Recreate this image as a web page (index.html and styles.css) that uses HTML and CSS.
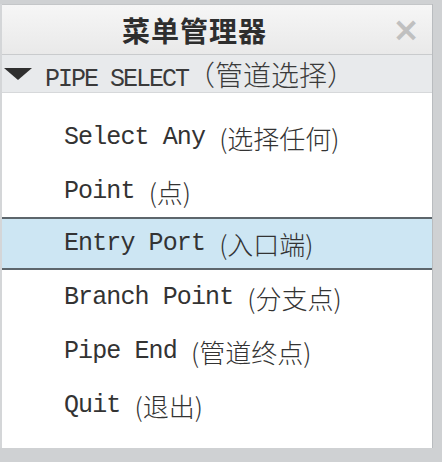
FILE: index.html
```html
<!DOCTYPE html>
<html lang="zh">
<head>
<meta charset="utf-8">
<title>菜单管理器</title>
<link rel="stylesheet" href="styles.css">
</head>
<body>
<div class="window">
  <div class="titlebar">
    <span class="title">菜单管理器</span>
    <span class="close">×</span>
  </div>
  <div class="section">
    <span class="arrow"></span>
    <span class="section-label">PIPE SELECT<span class="zh">（管道选择）</span></span>
  </div>
  <ul class="menu">
    <li class="item">Select Any <span class="zh">(选择任何)</span></li>
    <li class="item">Point <span class="zh">(点)</span></li>
    <li class="item active">Entry Port <span class="zh">(入口端)</span></li>
    <li class="item">Branch Point <span class="zh">(分支点)</span></li>
    <li class="item">Pipe End <span class="zh">(管道终点)</span></li>
    <li class="item">Quit <span class="zh">(退出)</span></li>
  </ul>
</div>
</body>
</html>
```
FILE: styles.css
```css
* { box-sizing: border-box; }
html, body {
  margin: 0;
  padding: 0;
}
body {
  width: 442px;
  height: 462px;
  background: #cfd1d3;
  overflow: hidden;
  font-family: "Liberation Mono", "Noto Sans CJK SC", monospace;
  color: #333;
}
.window {
  width: 433px;
  margin-top: 4px;
  background: #e9eaeb;
  border-left: 2px solid #d4d6d8;
  border-right: 1px solid #b9bcbf;
}
.titlebar {
  height: 51px;
  display: flex;
  align-items: center;
  border-top: 1px solid #c4c6c8;
  border-bottom: 1px solid #c9cbcd;
  background: linear-gradient(#f6f6f6, #e9e9e9);
  position: relative;
}
.title {
  margin-left: 120px;
  font-family: "Noto Sans CJK SC", sans-serif;
  font-weight: 700;
  font-size: 28px;
  letter-spacing: 1px;
  color: #2e2e2e;
}
.close {
  position: absolute;
  right: 12px;
  top: 5px;
  font-family: "DejaVu Sans", sans-serif;
  font-size: 33px;
  font-weight: 700;
  color: #c0c0c0;
}
.section {
  height: 38px;
  display: flex;
  align-items: center;
  background: #e8eaec;
  border-bottom: 1px solid #d6d8da;
}
.arrow {
  width: 0;
  height: 0;
  margin-left: 2px;
  border-left: 14px solid transparent;
  border-right: 14px solid transparent;
  border-top: 12px solid #2f2f2f;
}
.section-label {
  margin-left: 13px;
  font-size: 25px;
  letter-spacing: -2px;
  color: #3a3a3a;
  white-space: pre;
}
.section-label .zh {
  font-family: "Noto Sans CJK SC", sans-serif;
  font-size: 28px;
  font-weight: 300;
  letter-spacing: 0;
  margin-left: -1px;
}
.menu {
  list-style: none;
  margin: 0;
  padding: 17px 0 16px;
  background: #ffffff;
}
.item {
  height: 54px;
  display: flex;
  align-items: center;
  padding-left: 62px;
  font-size: 25px;
  letter-spacing: -0.9px;
  white-space: pre;
  color: #333;
}
.item .zh {
  font-family: "Noto Sans CJK SC", sans-serif;
  font-size: 26px;
  font-weight: 300;
  letter-spacing: 0;
}
.item.active {
  background: #cde6f3;
  border-top: 2px solid #5d666c;
  border-bottom: 2px solid #5d666c;
  margin-top: -1px;
  height: 53px;
}
```
